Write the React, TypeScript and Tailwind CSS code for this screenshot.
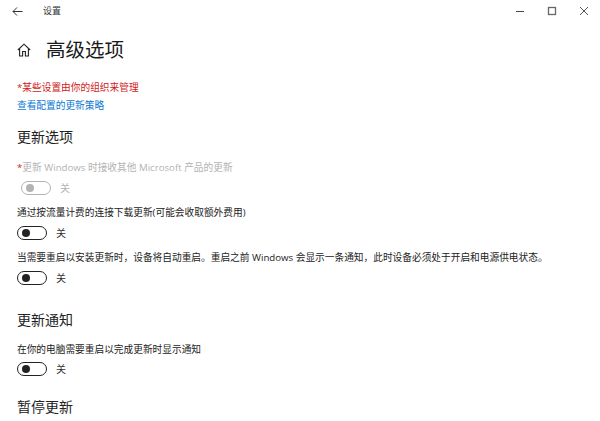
import React from 'react';

const font = { fontFamily: '"Open Sans", "Noto Sans CJK SC", sans-serif' };

const Toggle = ({ disabled = false }: { disabled?: boolean }) => (
  <div className="flex items-center h-[16px]">
    <div
      className={`w-[30px] h-[14px] rounded-full border-[1.5px] flex items-center pl-[3.5px] ${
        disabled ? 'border-[#b3b3b3]' : 'border-[#222]'
      }`}
    >
      <div className={`w-[8px] h-[8px] rounded-full ${disabled ? 'bg-[#b3b3b3]' : 'bg-[#222]'}`} />
    </div>
    <span className={`ml-[9px] text-[10px] leading-none ${disabled ? 'text-[#b3b3b3]' : 'text-[#333]'}`}>关</span>
  </div>
);

const Heading = ({ children, className }: { children: React.ReactNode; className: string }) => (
  <div className={`text-[14px] leading-[20px] text-[#222] ${className}`}>{children}</div>
);

const Label = ({ children, className }: { children: React.ReactNode; className: string }) => (
  <div className={`text-[9.7px] leading-[14px] whitespace-nowrap text-[#222] ${className}`}>{children}</div>
);

export default function App() {
  return (
    <div className="w-[600px] h-[421px] overflow-hidden bg-white flex flex-col" style={font}>
      <div className="flex items-center h-[22px] shrink-0">
        <svg className="ml-[12px]" width="11" height="11" viewBox="0 0 11 11" fill="none" stroke="#333" strokeWidth="1">
          <path d="M10.5 5.5H1M5 1.5L1 5.5L5 9.5" />
        </svg>
        <span className="ml-[20px] text-[9px] text-[#333]">设置</span>
        <div className="ml-auto flex items-center">
          <svg width="10" height="10" viewBox="0 0 10 10" stroke="#444" fill="none"><path d="M1 5.5H9" /></svg>
          <svg className="ml-[22px]" width="10" height="10" viewBox="0 0 10 10" stroke="#666" strokeWidth="1.3" fill="none"><rect x="1.5" y="1.5" width="7" height="7" /></svg>
          <svg className="ml-[22px] mr-[11px]" width="10" height="10" viewBox="0 0 10 10" stroke="#555" fill="none"><path d="M1 1L9 9M9 1L1 9" /></svg>
        </div>
      </div>

      <div className="flex items-center mt-[15px] h-[26px] shrink-0">
        <svg className="ml-[17px]" width="14" height="14" viewBox="0 0 14 14" fill="none" stroke="#222" strokeWidth="1.1">
          <path d="M0.8 7L7 1.2L13.2 7M2.6 5.5V13H5.6V8.5H8.4V13H11.4V5.5" />
        </svg>
        <span className="ml-[15px] text-[19.5px] leading-none text-[#1a1a1a]">高级选项</span>
      </div>

      <div className="pl-[17px] flex flex-col">
        <Label className="mt-[18px] !text-[#d11a1a]">*某些设置由你的组织来管理</Label>
        <Label className="mt-[4px] !text-[#0a78d4]">查看配置的更新策略</Label>

        <Heading className="mt-[14px]">更新选项</Heading>
        <Label className="mt-[14px] !text-[#b3b3b3]">
          <span className="text-[#d11a1a]">*</span>更新 Windows 时接收其他 Microsoft 产品的更新
        </Label>
        <div className="mt-[5px] pl-[4px]"><Toggle disabled /></div>
        <Label className="mt-[10px]">通过按流量计费的连接下载更新(可能会收取额外费用)</Label>
        <div className="mt-[5px]"><Toggle /></div>
        <Label className="mt-[10px]">当需要重启以安装更新时，设备将自动重启。重启之前 Windows 会显示一条通知，此时设备必须处于开启和电源供电状态。</Label>
        <div className="mt-[5px]"><Toggle /></div>

        <Heading className="mt-[24px]">更新通知</Heading>
        <Label className="mt-[13px]">在你的电脑需要重启以完成更新时显示通知</Label>
        <div className="mt-[4px]"><Toggle /></div>
        <Heading className="mt-[20px]">暂停更新</Heading>
      </div>
    </div>
  );
}
